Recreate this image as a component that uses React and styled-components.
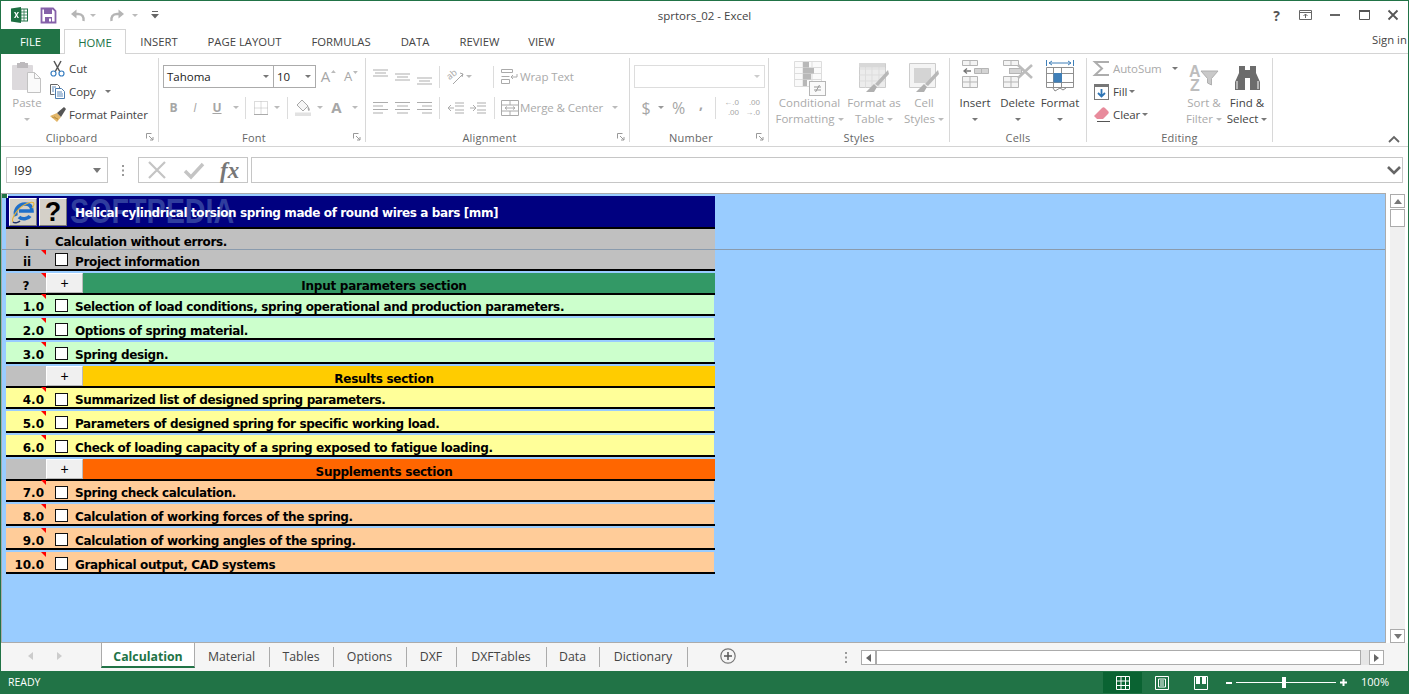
import React from 'react';
import styled, { createGlobalStyle } from 'styled-components';

const GREEN = '#217346';
const UI = '"Open Sans", "Noto Sans", sans-serif';

const Global = createGlobalStyle`
  html, body { margin: 0; padding: 0; overflow: hidden; background: #fff; }
  * { box-sizing: border-box; }
  svg { overflow: visible; }
`;
const Win = styled.div`
  width: 1409px; height: 694px; display: flex; flex-direction: column;
  border: 1px solid ${GREEN}; border-bottom: 0; font-family: ${UI}; font-size: 11.5px; color: #444; background: #fff; overflow: hidden;
`;
/* title bar */
const TitleBar = styled.header`
  height: 28px; flex: none; display: grid; grid-template-columns: 1fr auto 1fr; align-items: center; color: #444;
`;
const Qat = styled.div`display: flex; align-items: center; padding-left: 10px; height: 100%;`;
const QatSlot = styled.span`display: flex; align-items: center; width: ${p => p.$w}px; flex: none;`;
const Title = styled.div`font-size: 11.5px; color: #444;`;
const WinCtl = styled.div`display: flex; justify-content: flex-end; align-items: center; padding-right: 0;`;
const WinBtn = styled.span`width: 29.2px; display: flex; justify-content: center; color: #555; align-items: center; font-weight: 700; font-size: 14px;`;

/* ribbon tabs */
const TabRow = styled.nav`
  height: 25px; flex: none; display: flex; border-bottom: 1px solid #d4d4d4; font-size: 11.3px;
`;
const FileTab = styled.div`width: 59px; height: 25px; background: ${GREEN}; color: #fff; display: flex; align-items: center; justify-content: center; margin-right: 4px; flex: none;`;
const RibTab = styled.div`
  width: ${p => p.$w}px; height: ${p => (p.$on ? 25 : 24)}px; display: flex; align-items: center; justify-content: center; flex: none;
  color: ${p => (p.$on ? GREEN : '#444')}; background: #fff;
  border: ${p => (p.$on ? '1px solid #d4d4d4' : '0')}; border-bottom: 0;
`;
const SignIn = styled.div`margin-left: auto; width: 36px; height: 20px; display: flex; align-items: center; white-space: nowrap; color: #444; flex: none; font-size: 11.3px;`;

/* ribbon */
const Ribbon = styled.div`
  height: 93px; flex: none; display: flex; padding: 4px 0; border-bottom: 1px solid #d4d4d4; position: relative;
`;
const Group = styled.section`
  width: ${p => p.$w}px; flex: none; height: 84px; display: flex; flex-direction: column; border-right: 1px solid #d8d8d8;
`;
const Body = styled.div`
  flex: 1; min-height: 0; display: flex; padding-left: ${p => p.$pl || 0}px;
`;
const Foot = styled.div`
  height: 16px; margin-bottom: -3px; flex: none; display: flex; align-items: center; font-size: 11px; color: #666; letter-spacing: .2px;
`;
const FootText = styled.span`flex: 1; text-align: center;`;
const Launcher = styled.span`width: 16px; flex: none; display: flex; justify-content: center;`;
const Big = styled.div`
  width: ${p => p.$w}px; flex: none; display: flex; flex-direction: column; align-items: center; line-height: 16px;
  color: ${p => (p.$off ? '#aaa' : '#444')}; white-space: nowrap;
`;
const BigIcon = styled.div`height: 36px; margin-top: 2px; margin-bottom: -1px; display: flex; align-items: ${p => (p.$top ? 'flex-start' : 'center')}; justify-content: center;`;
const Line = styled.div`height: 16px; display: flex; align-items: center; justify-content: center; gap: 3px;`;
const SmallCol = styled.div`display: flex; flex-direction: column; margin-top: -1px; margin-left: ${p => p.$ml || 0}px; width: ${p => (p.$w ? `${p.$w}px` : 'auto')}; flex: none;`;
const SmallRow = styled.div`
  height: 23px; display: flex; align-items: center; white-space: nowrap; letter-spacing: -.1px; color: ${p => (p.$off ? '#aaa' : '#444')};
`;
const IconBox = styled.span`width: ${p => p.$w || 19}px; flex: none; display: flex; align-items: center; margin-left: ${p => p.$ml || 0}px;`;
const Caret = styled.i`
  display: inline-block; flex: none; width: 0; height: 0; border-left: 3px solid transparent; border-right: 3px solid transparent;
  border-top: 3px solid ${p => p.$c || '#777'}; margin-left: ${p => p.$ml || 0}px;
`;
const Stack = styled.div`display: flex; flex-direction: column; margin-top: 7px;`;
const ToolRow = styled.div`display: flex; align-items: center; height: 23px; margin-bottom: ${p => p.$mb || 0}px;`;
const Combo = styled.div`
  width: ${p => p.$w}px; height: 23px; margin-left: ${p => p.$ml || 0}px; flex: none; display: flex; align-items: center; justify-content: space-between; padding: 0 4px 0 3px;
  border: 1px solid ${p => p.$line || '#ababab'}; color: #222; font-size: 11.5px;
`;
const Slot = styled.span`
  width: ${p => p.$w}px; flex: none; display: flex; align-items: center; justify-content: center; color: #a6a6a6;
  font-size: ${p => p.$fs || 13}px; font-weight: ${p => (p.$b ? 700 : 400)}; font-style: ${p => (p.$i ? 'italic' : 'normal')};
  text-decoration: ${p => (p.$u ? 'underline' : 'none')}; line-height: 1; padding-bottom: ${p => p.$lift || 0}px;
`;
const SizeTick = styled.span`align-self: flex-start; margin-left: 1px; margin-top: 1px; display: flex;`;
const Sep = styled.span`width: 1px; height: 22px; background: #dcdcdc; flex: none; margin: 0 ${p => p.$m || 4}px;`;
const Decimal = styled.span`display: flex; flex-direction: column; font: 8px/9.5px "Liberation Sans", sans-serif; color: #a6a6a6; align-items: flex-end; width: 17px; margin-left: ${p => p.$ml || 0}px; flex: none;`;
const Collapse = styled.span`position: absolute; right: 8px; bottom: 3px; display: flex;`;

/* formula bar */
const FormulaBar = styled.div`height: 46px; flex: none; display: flex; align-items: flex-start; padding: 10px 5px 0 5px;`;
const NameBox = styled.div`
  width: 102px; height: 26px; border: 1px solid #c6c6c6; display: flex; align-items: center; justify-content: space-between; padding: 0 6px 0 7px; color: #333; flex: none; font-size: 12.5px;
`;
const Dots = styled.div`width: 30px; height: 26px; flex: none; display: flex; align-items: center; justify-content: center;`;
const FxBox = styled.div`width: 110px; height: 26px; border: 1px solid #c6c6c6; display: flex; align-items: center; padding-left: 9px; flex: none;`;
const FxSlot = styled.span`width: ${p => p.$w}px; flex: none; display: flex; align-items: center;`;
const FxText = styled.span`font-family: "Liberation Serif", serif; font-style: italic; font-weight: 700; font-size: 23px; color: #777; line-height: 1;`;
const FInput = styled.div`flex: 1; height: 26px; margin-left: 3px; border: 1px solid #c6c6c6; display: flex; align-items: center; justify-content: flex-end; padding-right: 1px;`;

/* sheet */
const SheetWrap = styled.main`flex: 1; min-height: 0; display: flex;`;
const Canvas = styled.div`
  flex: 1; background: #99ccff; border: 1px solid #ababab; padding: 2px 0 0 4px; position: relative; overflow: hidden;
`;
const FreezeLine = styled.span`position: absolute; left: 0; right: 0; top: 55px; height: 1px; background: #8a9bad; z-index: 3;`;
const Handle = styled.span`position: absolute; left: 0; top: 0; width: 6px; height: 4px; background: ${GREEN}; border-right: 1px solid #fff; z-index: 3;`;
const VScroll = styled.div`width: 22px; flex: none; padding: 1px 3px 0 4px; display: flex; flex-direction: column; background: #fff;`;
const SBtn = styled.div`height: ${p => p.$h || 14}px; margin-top: ${p => p.$mt || 0}px; flex: none; border: 1px solid #ababab; background: #fff; display: flex; align-items: center; justify-content: center;`;
const Track = styled.div`flex: 1; background: #f0f0f0;`;

const Table = styled.div`width: 709px; display: flex; flex-direction: column;`;
const Head = styled.div`
  height: 33px; background: #000080; border-bottom: 2px solid #000; display: flex; align-items: center; padding: 1px 0 0 3px; position: relative;
`;
const Watermark = styled.span`
  position: absolute; left: 64px; top: 0; font: 700 35px/29px "Liberation Sans", sans-serif; color: #2f3d9e; white-space: nowrap; transform: scaleX(.82); transform-origin: left center;
`;
const HeadBtn = styled.div`
  width: 28px; height: 28px; flex: none; margin-right: 2px; background: #d4d0c8; border: 1px solid; border-color: #fff #777 #777 #fff; display: flex; align-items: center; justify-content: center; position: relative;
  font: 700 27px "Liberation Sans", sans-serif; color: #000;
`;
const sheetFont = '"DejaVu Sans", Verdana, sans-serif';
const HeadTitle = styled.div`
  position: relative; margin-left: 6px; padding-top: 2px; color: #fff; font: 700 12px ${sheetFont}; letter-spacing: -.39px; white-space: nowrap;
`;
const Row = styled.div`
  margin-top: ${p => p.$gap || 0}px; height: ${p => p.$h + (p.$line ? 2 : 0)}px; flex: none; border-bottom: ${p => (p.$line ? '2px solid #000' : '0')};
  display: flex; position: relative;
`;
const RowFill = styled.div`
  flex: 1; background: ${p => p.$bg}; margin-right: ${p => p.$inset || 0}px; display: flex; align-items: center; padding-top: 5px;
  font: 700 12px ${sheetFont}; letter-spacing: -.36px; color: #000; white-space: nowrap;
`;
const Num = styled.span`
  width: 40px; flex: none; padding: ${p => (p.$center ? '0 0 0 2px' : '0 2px 0 0')}; text-align: ${p => (p.$center ? 'center' : 'right')}; letter-spacing: 0;
`;
const Box = styled.span`width: 13px; height: 13px; flex: none; margin-left: 9px; background: #fff; border: 1px solid #111; margin-top: ${p => p.$mt ?? -2}px;`;
const RowText = styled.span`margin-left: ${p => p.$ml ?? 7}px;`;
const Flag = styled.span`
  position: absolute; left: 35px; top: ${p => p.$top ?? 0}px; width: 0; height: 0; border-top: 5px solid #ff0000; border-left: 5px solid transparent; z-index: 2;
`;
const PlusBtn = styled.div`
  width: 37px; flex: none; background: #f0f0f0; border: 1px solid; border-color: #fff #bbb #bbb #fff; color: #000; display: flex; align-items: center; justify-content: center;
  font: 400 14px "Liberation Sans", sans-serif;
`;
const SecCell = styled.div`width: 40px; flex: none; background: #c0c0c0; display: flex; align-items: center; justify-content: center; padding-top: 6px; font: 700 12px ${sheetFont}; color: #000;`;
const SecTitle = styled.div`
  flex: 1; background: ${p => p.$bg}; display: flex; align-items: center; justify-content: center; padding: 6px 30px 0 0; font: 700 12px ${sheetFont}; letter-spacing: -.26px; color: #000;
`;

/* sheet tabs */
const TabsBar = styled.div`height: 28px; flex: none; background: #f5f5f5; display: flex; align-items: flex-start;`;
const Nav = styled.div`width: 100px; height: 26px; flex: none; display: flex; align-items: center; padding-left: 27px; gap: 24px;`;
const SheetTab = styled.div`
  width: ${p => p.$w}px; flex: none; display: flex; align-items: center; justify-content: center;
  height: ${p => (p.$on ? 25 : 20)}px; margin-top: ${p => (p.$on ? 0 : 4)}px; font-size: 12.3px; color: ${p => (p.$on ? GREEN : '#444')}; font-weight: ${p => (p.$on ? 700 : 400)};
  background: ${p => (p.$on ? '#fff' : 'transparent')}; border-right: 1px solid #ababab; border-left: ${p => (p.$on ? '1px solid #ababab' : '0')};
  border-bottom: ${p => (p.$on ? `2px solid ${GREEN}` : '0')}; padding: ${p => (p.$on ? '3px 0 0' : '0 1px 1px 0')};
`;
const AddTab = styled.span`margin-left: 32px; height: 26px; display: flex; align-items: center;`;
const HRight = styled.div`margin-left: auto; display: flex; align-items: center; height: 15px; margin-top: 7px; padding-right: 24px;`;
const HDots = styled.span`margin-right: 14px; display: flex;`;
const HBtn = styled.div`width: 15px; height: 15px; flex: none; border: 1px solid #ababab; background: #fff; display: flex; align-items: center; justify-content: center;`;
const HThumb = styled.div`width: 485px; height: 15px; border: 1px solid #ababab; background: #fff; flex: none;`;
const HTrack = styled.div`width: 8px; height: 15px; background: #e6e6e6; flex: none;`;

/* status */
const Status = styled.footer`height: 23px; flex: none; background: ${GREEN}; color: #fff; display: flex; align-items: center; font-size: 10.5px; padding-left: 7px;`;
const StatusText = styled.span`margin-top: -2px;`;
const StatusRight = styled.div`margin-left: auto; display: flex; align-items: center; height: 100%; padding-right: 19px;`;
const ViewBtn = styled.span`width: 39px; height: 21px; display: flex; align-items: center; justify-content: center; background: ${p => (p.$on ? '#0a6332' : 'transparent')};`;
const Slider = styled.div`width: 100px; height: 1px; background: #fff; margin: 0 4px; position: relative;`;
const Thumb = styled.span`position: absolute; left: 46px; top: -5px; width: 4px; height: 11px; background: #fff;`;
const ZoomPct = styled.span`font-size: 11px; margin: -3px 0 0 14px;`;

const ExcelLogo = () => (
  <svg width="17" height="16" viewBox="0 0 17 16">
    <rect x="6" y="2" width="10.5" height="12" fill="#fff" stroke="#217346" />
    <path d="M10 2v12M13 2v12M6 5h10M6 8h10M6 11h10" stroke="#217346" strokeWidth=".8" />
    <path d="M0 1.5 10 0v16L0 14.5z" fill="#1d6f42" />
    <path d="M3 5l1.7 3L3 11h1.5l1-2 1 2H8L6.2 8 8 5H6.5l-1 2-1-2z" fill="#fff" />
  </svg>
);
const SaveIcon = () => (
  <svg width="15" height="15" viewBox="0 0 15 15">
    <path d="M.5.5h11.5l2.5 2.5v11.5H.5z" fill="#fff" stroke="#8561a9" strokeWidth="1.8" />
    <rect x="3" y="1" width="8" height="5" fill="#8561a9" />
    <rect x="4" y="9" width="7" height="5" fill="#8561a9" />
    <rect x="8" y="10.5" width="2" height="3" fill="#fff" />
  </svg>
);
const UndoIcon = ({ flip }) => (
  <svg width="15" height="13" viewBox="0 0 15 13" style={flip ? { transform: 'scaleX(-1)' } : undefined}>
    <path d="M13.5 12c.5-4-1-7-5.5-7H3" fill="none" stroke="#b5b5b5" strokeWidth="2.4" />
    <path d="M6.5 .5 1 5l5.5 4.5z" fill="#b5b5b5" />
  </svg>
);
const QatMore = () => (
  <svg width="8" height="8" viewBox="0 0 8 8"><path d="M1 0h6v1H1zM0 3h8L4 7.5z" fill="#666" /></svg>
);
const PasteIcon = () => (
  <svg width="30" height="32" viewBox="0 0 30 32">
    <rect x="0" y="3" width="21" height="25" rx="1" fill="#dcd9dc" />
    <rect x="5" y="1" width="11" height="5" fill="#bdbabd" />
    <rect x="8" y="0" width="5" height="3" fill="#bdbabd" />
    <path d="M15.5 10.5h7l6 6v14h-13z" fill="#fafafa" stroke="#c2c2c2" />
    <path d="M22.5 10.5v6h6" fill="none" stroke="#c2c2c2" />
  </svg>
);
const CutIcon = () => (
  <svg width="15" height="16" viewBox="0 0 15 16">
    <path d="M4 0l6 11M11 0 5 11" stroke="#555" strokeWidth="1.5" />
    <circle cx="3.5" cy="12.5" r="2.5" fill="none" stroke="#3a7fc1" strokeWidth="1.2" />
    <circle cx="11.5" cy="12.5" r="2.5" fill="none" stroke="#3a7fc1" strokeWidth="1.2" />
  </svg>
);
const CopyIcon = () => (
  <svg width="16" height="15" viewBox="0 0 16 15">
    <path d="M.5.5h7l2 2v2M.5.5v10h4" fill="#fff" stroke="#666" />
    <path d="M5.5 4.5h6l3 3v7h-9z" fill="#fff" stroke="#4a7cb0" />
    <path d="M7 8h5M7 10h6M7 12h6M2 3h4M2 5h2M2 7h2" stroke="#4a7cb0" strokeWidth=".9" />
  </svg>
);
const BrushIcon = () => (
  <svg width="16" height="15" viewBox="0 0 16 15">
    <path d="M0 9l7-3 4 4-4 5C5 13 2 11 0 9z" fill="#e3b76a" />
    <path d="M2 10l6 2M4 9.5l4 3" stroke="#b98f3f" strokeWidth=".8" />
    <path d="M7 6l4 4 5-8-2-2z" fill="#555" />
  </svg>
);
const BordersIcon = () => (
  <svg width="14" height="14" viewBox="0 0 14 14">
    <path d="M.5.5h13v13H.5zM7 .5v13M.5 7h13" fill="none" stroke="#b9b9b9" strokeDasharray="1 1" />
    <path d="M0 13.5h14" stroke="#aaa" />
  </svg>
);
const FillIcon = () => (
  <svg width="17" height="17" viewBox="0 0 17 17">
    <path d="M7 1l6 6-5 5-6-6z" fill="#f6f6f6" stroke="#a8a8a8" />
    <path d="M13 7c1 2 2.5 3 1.5 4.5S12 10 13 7z" fill="#a8a8a8" />
    <rect x="0" y="13.5" width="16" height="3.5" fill="#e2e2e2" />
  </svg>
);
const Lines = ({ kind }) => {
  const rowsOf = { l: [[0, 15], [0, 10], [0, 15], [0, 10]], c: [[0, 15], [2, 11], [0, 15], [2, 11]], r: [[0, 15], [5, 10], [0, 15], [5, 10]] }[kind];
  return (
    <svg width="15" height="13" viewBox="0 0 15 13">
      {rowsOf.map((a, i) => <rect key={i} x={a[0]} y={i * 3.5 + 1} width={a[1]} height="1" fill="#adadad" />)}
    </svg>
  );
};
const VAlign = ({ y }) => (
  <svg width="15" height="18" viewBox="0 0 15 18">
    <path d={`M0 ${y}h15M2 ${y + 3}h11M0 ${y + 6}h15`} stroke="#adadad" />
  </svg>
);
const OrientIcon = () => (
  <svg width="16" height="16" viewBox="0 0 16 16">
    <text x="0" y="9" transform="rotate(-40 4 8)" fontSize="9" fill="#a6a6a6" fontFamily='"Open Sans", sans-serif'>ab</text>
    <path d="M5 15 15 5M12 4l3 1-1 3" fill="none" stroke="#a6a6a6" />
  </svg>
);
const Indent = ({ dir }) => (
  <svg width="16" height="12" viewBox="0 0 16 12">
    <path d="M7 1h9M7 4h9M7 8h9M7 11h9" stroke="#adadad" />
    <path d={dir < 0 ? 'M0 6h6M3 3 0 6l3 3' : 'M0 6h5M3 3l3 3-3 3'} fill="none" stroke="#adadad" />
  </svg>
);
const WrapIcon = () => (
  <svg width="18" height="16" viewBox="0 0 18 16">
    <path d="M.5.5h11v3H.5zM.5 7.5h8M.5 10.5h8v4H.5zM11 8h5V5M12 6l-2 2 2 2" fill="none" stroke="#aaa" />
  </svg>
);
const MergeIcon = () => (
  <svg width="18" height="16" viewBox="0 0 18 16">
    <path d="M.5.5h17v15H.5zM.5 5h17M.5 11h17M9 .5V5M9 11v4.5" fill="none" stroke="#aaa" />
    <path d="M4 8h10M6 6.5 4 8l2 1.5M12 6.5 14 8l-2 1.5" fill="none" stroke="#aaa" />
  </svg>
);
const Launch = () => (
  <svg width="8" height="8" viewBox="0 0 8 8"><path d="M.5 .5h5M.5 .5v5M3 3l4 4M7 4v3H4" fill="none" stroke="#999" /></svg>
);
const CFIcon = () => (
  <svg width="32" height="35" viewBox="0 0 32 35">
    <path d="M.5.5h27v25H.5z" fill="#fafafa" stroke="#ddd" />
    <path d="M9 .5v25M18 .5v25M.5 6.5h27M.5 12.5h27M.5 18.5h27" stroke="#ddd" />
    <rect x="9" y="1" width="6" height="5.5" fill="#b8b8b8" /><rect x="9" y="7" width="11" height="5.5" fill="#b8b8b8" /><rect x="9" y="13" width="8" height="5.5" fill="#b8b8b8" /><rect x="9" y="19" width="4" height="6" fill="#b8b8b8" />
    <rect x="15.5" y="20.5" width="16" height="14" fill="#fafafa" stroke="#b5b5b5" />
    <path d="M20 26h7M20 29h7M25.5 24l-4 7" stroke="#999" />
  </svg>
);
const TableIcon = ({ cell }) => (
  <svg width="30" height="30" viewBox="0 0 30 30">
    <path d="M.5.5h26v24H.5z" fill={cell ? '#f4f4f4' : '#ececec'} stroke="#ccc" />
    {cell ? <rect x="5" y="5" width="17" height="15" fill="#d4d4d4" /> : <path d="M6.5.5v24M13 .5v24M20 .5v24M.5 6h26M.5 12h26M.5 18h26" stroke="#ddd" />}
    {!cell && <rect x="0" y="0" width="26" height="4.5" fill="#d8d8d8" />}
    <path d="M10 26 15 21l3 3-3 5H7z" fill="#b0b0b0" />
    <path d="M16 21 29 7l1 4-11 12z" fill="#b8b8b8" />
  </svg>
);
const InsertIcon = () => (
  <svg width="27" height="28" viewBox="0 0 27 28">
    <path d="M.5.5h15v5H.5zM8 .5v5M.5 16.5h15v11H.5zM.5 22h15M8 16.5v11" fill="#f4f4f4" stroke="#b5b5b5" />
    <path d="M12.5 8.5h7v5h-7zM19.5 8.5h7v5h-7z" fill="#d4d4d4" stroke="#b5b5b5" />
    <path d="M2 11h7M5 8.5 2 11l3 2.5" fill="none" stroke="#777" strokeWidth="1.3" />
  </svg>
);
const DeleteIcon = () => (
  <svg width="30" height="28" viewBox="0 0 30 28">
    <path d="M.5.5h15v5H.5zM8 .5v5M.5 16.5h15v11H.5zM.5 22h15M8 16.5v11" fill="#f4f4f4" stroke="#b5b5b5" />
    <rect x="6.5" y="8.5" width="12" height="5" fill="#d4d4d4" stroke="#b5b5b5" />
    <path d="M15 5 29 18M29 5 15 18" stroke="#bcbcbc" strokeWidth="2.6" />
  </svg>
);
const FormatIcon = () => (
  <svg width="29" height="32" viewBox="0 0 29 32">
    <path d="M.5 0v6M27.5 0v6M3 3h22M6 1 3 3l3 2M22 1l3 2-3 2" fill="none" stroke="#3f7fb8" />
    <path d="M.5 7.5h27v20H.5zM.5 13.5h27M.5 22.5h27M7.5 7.5v20M15.5 7.5v20" fill="#fff" stroke="#8f8f8f" />
    <rect x="7.5" y="13" width="8.5" height="9.5" fill="#3f7fb8" />
    <path d="M7 28l2 3 5-3 3 2 3-2" fill="none" stroke="#888" />
  </svg>
);
const Sigma = () => (
  <svg width="16" height="15" viewBox="0 0 16 15"><path d="M15 1H1l7 6.5L1 14h14" fill="none" stroke="#adadad" strokeWidth="2" /></svg>
);
const FillDown = () => (
  <svg width="15" height="16" viewBox="0 0 15 16">
    <rect x=".5" y=".5" width="14" height="15" fill="#fff" stroke="#777" /><rect x="0" y="0" width="15" height="3" fill="#777" />
    <path d="M7.5 5v7M4 9l3.5 3.5L11 9" fill="none" stroke="#2f75b5" strokeWidth="1.8" />
  </svg>
);
const Eraser = () => (
  <svg width="16" height="15" viewBox="0 0 16 15">
    <path d="M0 9 8 1c1-1 2-1 3 0l3 3c1 1 1 2 0 3l-5 5H3z" fill="#e88b9c" />
    <path d="M3 14.5h13" stroke="#555" />
  </svg>
);
const SortIcon = () => (
  <svg width="30" height="28" viewBox="0 0 30 28">
    <text x="0" y="13" fontSize="16" fontWeight="700" fill="#bdbdbd" fontFamily='"Liberation Sans", sans-serif'>A</text>
    <text x="1" y="27" fontSize="16" fontWeight="700" fill="#bdbdbd" fontFamily='"Liberation Sans", sans-serif'>Z</text>
    <path d="M12 7h17l-6.5 7.5V21l-4-2v-4.5z" fill="#c9c9c9" stroke="#b0b0b0" />
  </svg>
);
const Binoculars = () => (
  <svg width="27" height="24" viewBox="0 0 27 24">
    <path d="M5 0h6v4h5V0h6v7l4 9v8H16V12h-5v12H1v-8l4-9z" fill="#6c6c6c" />
    <path d="M3 15v8M24 15v8" stroke="#fff" />
  </svg>
);
const IELogo = () => (
  <svg width="24" height="24" viewBox="0 0 24 24">
    <path d="M5 16C3 11 7 4 14 4c5 0 7 3 7 7H8M19 16c-2 3-8 4-11 1" fill="none" stroke="#1f6fc9" strokeWidth="3.6" />
    <path d="M2 22C0 19 6 8 15 4c5-2.5 8-2 8 0 0 1.5-1 3-2 4" fill="none" stroke="#e5b23a" strokeWidth="1.1" />
    <path d="M2 22c2 2 6 0 7-1" fill="none" stroke="#23356f" strokeWidth="1.5" />
  </svg>
);
const X = () => <svg width="18" height="18" viewBox="0 0 18 18"><path d="M1 1 17 17M17 1 1 17" stroke="#c4c4c4" strokeWidth="2.2" /></svg>;
const Check = () => <svg width="20" height="17" viewBox="0 0 20 17"><path d="M1 9l6 6L19 2" fill="none" stroke="#c4c4c4" strokeWidth="3.4" /></svg>;
const Chev = () => <svg width="14" height="9" viewBox="0 0 14 9"><path d="M1 1l6 6 6-6" fill="none" stroke="#666" strokeWidth="2.6" /></svg>;
const Up = () => <svg width="12" height="7" viewBox="0 0 12 7"><path d="M1 6l5-5 5 5" fill="none" stroke="#666" strokeWidth="1.8" /></svg>;
const DotsV = ({ c = '#999' }) => <svg width="2" height="11" viewBox="0 0 2 11"><path d="M0 0h2v2H0zM0 4.5h2v2H0zM0 9h2v2H0z" fill={c} /></svg>;
const Tri = ({ dir, c = '#777', s = 1 }) => {
  const d = { u: 'M4 0l4 5H0z', d: 'M0 0h8L4 5z', l: 'M5 0v8L0 4z', r: 'M0 0v8l5-4z' }[dir];
  const w = dir === 'u' || dir === 'd' ? 8 : 5; const h = dir === 'u' || dir === 'd' ? 5 : 8;
  return <svg width={w * s} height={h * s} viewBox={`0 0 ${w} ${h}`}><path d={d} fill={c} /></svg>;
};
const Plus = () => (
  <svg width="16" height="16" viewBox="0 0 16 16"><circle cx="8" cy="8" r="7.2" fill="none" stroke="#777" strokeWidth="1.2" /><path d="M4 8h8M8 4v8" stroke="#555" strokeWidth="1.5" /></svg>
);
const ViewNormal = () => <svg width="14" height="14" viewBox="0 0 14 14"><path d="M.5.5h13v13H.5zM5 .5v13M9.5 .5v13M.5 5h13M.5 9.5h13" fill="none" stroke="#fff" /></svg>;
const ViewPage = () => <svg width="14" height="14" viewBox="0 0 14 14"><path d="M.5.5h13v13H.5z" fill="none" stroke="#fff" /><path d="M3.5 3h7v8h-7zM5 5h4M5 7h4M5 9h4" fill="none" stroke="#fff" /></svg>;
const ViewBreak = () => <svg width="14" height="14" viewBox="0 0 14 14"><path d="M.5.5h13v13H.5z" fill="none" stroke="#fff" /><path d="M2 0h4v8H2zM8 0h4v8H8z" fill="#fff" /></svg>;

const rows = [
  { t: 's', n: '?', title: 'Input parameters section', bg: '#339966', flag: true },
  { n: '1.0', text: 'Selection of load conditions, spring operational and production parameters.', bg: '#ccffcc', h: 19, boxMt: -4 },
  { n: '2.0', text: 'Options of spring material.', bg: '#ccffcc' },
  { n: '3.0', text: 'Spring design.', bg: '#ccffcc' },
  { t: 's', title: 'Results section', bg: '#ffcc00' },
  { n: '4.0', text: 'Summarized list of designed spring parameters.', bg: '#ffff99', h: 19 },
  { n: '5.0', text: 'Parameters of designed spring for specific working load.', bg: '#ffff99' },
  { n: '6.0', text: 'Check of loading capacity of a spring exposed to fatigue loading.', bg: '#ffff99' },
  { t: 's', title: 'Supplements section', bg: '#ff6600' },
  { n: '7.0', text: 'Spring check calculation.', bg: '#ffcc99', h: 19 },
  { n: '8.0', text: 'Calculation of working forces of the spring.', bg: '#ffcc99' },
  { n: '9.0', text: 'Calculation of working angles of the spring.', bg: '#ffcc99' },
  { n: '10.0', text: 'Graphical output, CAD systems', bg: '#ffcc99' },
];
const ribbonTabs = [['INSERT', 66], ['PAGE LAYOUT', 105], ['FORMULAS', 88], ['DATA', 60], ['REVIEW', 69], ['VIEW', 55]];
const sheets = [['Material', 75], ['Tables', 64], ['Options', 73], ['DXF', 50], ['DXFTables', 90], ['Data', 53], ['Dictionary', 88]];

export default function App() {
  return (
    <Win>
      <Global />
      <TitleBar>
        <Qat>
          <QatSlot $w={30}><ExcelLogo /></QatSlot>
          <QatSlot $w={29}><SaveIcon /></QatSlot>
          <QatSlot $w={20}><UndoIcon /></QatSlot>
          <QatSlot $w={20}><Caret $c="#bbb" /></QatSlot>
          <QatSlot $w={22}><UndoIcon flip /></QatSlot>
          <QatSlot $w={19}><Caret $c="#bbb" /></QatSlot>
          <QatSlot $w={10}><QatMore /></QatSlot>
        </Qat>
        <Title>sprtors_02 - Excel</Title>
        <WinCtl>
          <WinBtn>?</WinBtn>
          <WinBtn><svg width="13" height="10" viewBox="0 0 13 10"><path d="M.5.5h12v9H.5zM.5 2.5h12M6.5 8V4M4.5 6l2-2 2 2" fill="none" stroke="#666" /></svg></WinBtn>
          <WinBtn><svg width="10" height="2" viewBox="0 0 10 2"><rect width="10" height="2" fill="#666" /></svg></WinBtn>
          <WinBtn><svg width="11" height="10" viewBox="0 0 11 10"><path d="M.5.5h10v9H.5z" fill="none" stroke="#555" /><rect width="11" height="2" fill="#555" /></svg></WinBtn>
          <WinBtn><svg width="10" height="10" viewBox="0 0 10 10"><path d="M.5.5l9 9M9.5.5l-9 9" stroke="#555" strokeWidth="1.8" /></svg></WinBtn>
        </WinCtl>
      </TitleBar>
      <TabRow>
        <FileTab>FILE</FileTab>
        <RibTab $on $w={62}>HOME</RibTab>
        {ribbonTabs.map(([t, w]) => <RibTab key={t} $w={w}>{t}</RibTab>)}
        <SignIn>Sign in</SignIn>
      </TabRow>
      <Ribbon>
        <Group $w={158}>
          <Body $pl={11}>
            <Big $w={30} $off>
              <BigIcon><PasteIcon /></BigIcon>
              <Line>Paste</Line>
              <Line><Caret $c="#bbb" /></Line>
            </Big>
            <SmallCol $ml={8}>
              <SmallRow><IconBox><CutIcon /></IconBox>Cut</SmallRow>
              <SmallRow><IconBox><CopyIcon /></IconBox>Copy<Caret $ml={9} /></SmallRow>
              <SmallRow><IconBox><BrushIcon /></IconBox>Format Painter</SmallRow>
            </SmallCol>
          </Body>
          <Foot><FootText>Clipboard</FootText><Launcher><Launch /></Launcher></Foot>
        </Group>
        <Group $w={207}>
          <Body $pl={4}>
            <Stack>
              <ToolRow $mb={8}>
                <Combo $w={111}>Tahoma<Caret /></Combo>
                <Combo $w={43} $ml={-1}>10<Caret /></Combo>
                <Slot $w={25} $fs={15}>A<SizeTick><Tri dir="u" c="#bbb" s={.6} /></SizeTick></Slot>
                <Slot $w={20} $fs={13}>A<SizeTick><Tri dir="d" c="#bbb" s={.6} /></SizeTick></Slot>
              </ToolRow>
              <ToolRow>
                <Slot $w={21} $b $fs={12}>B</Slot>
                <Slot $w={22} $i $fs={12}>I</Slot>
                <Slot $w={22} $u $b $fs={12}>U</Slot>
                <Caret $c="#bbb" $ml={5} />
                <Sep $m={6} />
                <IconBox $w={14} $ml={2}><BordersIcon /></IconBox>
                <Caret $c="#bbb" $ml={6} />
                <Sep $m={7} />
                <IconBox $w={17}><FillIcon /></IconBox>
                <Caret $c="#bbb" $ml={5} />
                <Slot $w={27} $fs={15} $b>A</Slot>
                <Caret $c="#bbb" $ml={2} />
              </ToolRow>
            </Stack>
          </Body>
          <Foot><FootText>Font</FootText><Launcher><Launch /></Launcher></Foot>
        </Group>
        <Group $w={264}>
          <Body $pl={7}>
            <Stack>
              <ToolRow $mb={8}>
                <IconBox $w={22}><VAlign y={2} /></IconBox>
                <IconBox $w={22}><VAlign y={6} /></IconBox>
                <IconBox $w={21}><VAlign y={10} /></IconBox>
                <Sep $m={1} />
                <IconBox $w={18} $ml={7}><OrientIcon /></IconBox>
                <Caret $c="#bbb" />
                <Sep $m={21} />
                <IconBox $w={19} $ml={-14}><WrapIcon /></IconBox>
                <SmallRow $off>Wrap Text</SmallRow>
              </ToolRow>
              <ToolRow>
                <IconBox $w={22}><Lines kind="l" /></IconBox>
                <IconBox $w={22}><Lines kind="c" /></IconBox>
                <IconBox $w={21}><Lines kind="r" /></IconBox>
                <Sep $m={1} />
                <IconBox $w={22} $ml={7}><Indent dir={-1} /></IconBox>
                <IconBox $w={18}><Indent dir={1} /></IconBox>
                <Sep $m={6} />
                <IconBox $w={19}><MergeIcon /></IconBox>
                <SmallRow $off>Merge &amp; Center</SmallRow>
                <Caret $c="#bbb" $ml={9} />
              </ToolRow>
            </Stack>
          </Body>
          <Foot><FootText>Alignment</FootText><Launcher><Launch /></Launcher></Foot>
        </Group>
        <Group $w={139}>
          <Body $pl={4}>
            <Stack>
              <ToolRow $mb={8}><Combo $w={131} $line="#ddd"><span /><Caret $c="#ccc" /></Combo></ToolRow>
              <ToolRow>
                <Slot $w={24} $fs={16}>$</Slot>
                <Caret $c="#999" />
                <Slot $w={29} $fs={16}>%</Slot>
                <Slot $w={16} $b $fs={14} $lift={8}>,</Slot>
                <Sep $m={6} />
                <Decimal><span>←.0</span><span>.00</span></Decimal>
                <Decimal $ml={4}><span>.00</span><span>→.0</span></Decimal>
              </ToolRow>
            </Stack>
          </Body>
          <Foot><FootText>Number</FootText><Launcher><Launch /></Launcher></Foot>
        </Group>
        <Group $w={181}>
          <Body $pl={5}>
            <Big $w={71} $off><BigIcon><CFIcon /></BigIcon><Line>Conditional</Line><Line>Formatting<Caret $c="#bbb" /></Line></Big>
            <Big $w={58} $off><BigIcon><TableIcon /></BigIcon><Line>Format as</Line><Line>Table<Caret $c="#bbb" /></Line></Big>
            <Big $w={42} $off><BigIcon><TableIcon cell /></BigIcon><Line>Cell</Line><Line>Styles<Caret $c="#bbb" /></Line></Big>
          </Body>
          <Foot><FootText>Styles</FootText></Foot>
        </Group>
        <Group $w={137}>
          <Body $pl={4}>
            <Big $w={42}><BigIcon $top><InsertIcon /></BigIcon><Line>Insert</Line><Line><Caret /></Line></Big>
            <Big $w={43}><BigIcon $top><DeleteIcon /></BigIcon><Line>Delete</Line><Line><Caret /></Line></Big>
            <Big $w={42}><BigIcon $top><FormatIcon /></BigIcon><Line>Format</Line><Line><Caret /></Line></Big>
          </Body>
          <Foot><FootText>Cells</FootText></Foot>
        </Group>
        <Group $w={186}>
          <Body $pl={7}>
            <SmallCol $w={89}>
              <SmallRow $off><IconBox><Sigma /></IconBox>AutoSum<Caret $ml={10} /></SmallRow>
              <SmallRow><IconBox><FillDown /></IconBox>Fill<Caret $ml={2} /></SmallRow>
              <SmallRow><IconBox><Eraser /></IconBox>Clear<Caret $ml={2} /></SmallRow>
            </SmallCol>
            <Big $w={42} $off><BigIcon><SortIcon /></BigIcon><Line>Sort &amp;</Line><Line>Filter<Caret $c="#bbb" /></Line></Big>
            <Big $w={44}><BigIcon><Binoculars /></BigIcon><Line>Find &amp;</Line><Line>Select<Caret /></Line></Big>
          </Body>
          <Foot><FootText>Editing</FootText></Foot>
        </Group>
        <Collapse><Up /></Collapse>
      </Ribbon>
      <FormulaBar>
        <NameBox>I99<Tri dir="d" /></NameBox>
        <Dots><DotsV /></Dots>
        <FxBox><FxSlot $w={36}><X /></FxSlot><FxSlot $w={36}><Check /></FxSlot><FxText>fx</FxText></FxBox>
        <FInput><Chev /></FInput>
      </FormulaBar>
      <SheetWrap>
        <Canvas>
          <Handle />
          <FreezeLine />
          <Table>
            <Head>
              <Watermark>SOFTPEDIA</Watermark>
              <HeadBtn><IELogo /></HeadBtn>
              <HeadBtn>?</HeadBtn>
              <HeadTitle>Helical cylindrical torsion spring made of round wires a bars [mm]</HeadTitle>
            </Head>
            <Row $h={21}>
              <RowFill $bg="#c0c0c0"><Num $center>i</Num><RowText $ml={9}>Calculation without errors.</RowText></RowFill>
            </Row>
            <Row $h={19} $line>
              <Flag />
              <RowFill $bg="#c0c0c0"><Num $center>ii</Num><Box $mt={-6} /><RowText>Project information</RowText></RowFill>
            </Row>
            {rows.map((r, i) => {
              if (r.t === 's') {
                return (
                  <Row key={i} $h={20} $gap={2} $line>
                    {r.flag && <Flag />}
                    <SecCell>{r.n}</SecCell>
                    <PlusBtn>+</PlusBtn>
                    <SecTitle $bg={r.bg}>{r.title}</SecTitle>
                  </Row>
                );
              }
              const first = r.h === 19;
              return (
                <Row key={i} $h={r.h || 20} $gap={first ? 0 : 2} $line>
                  <Flag $top={first ? -1 : 0} />
                  <RowFill $bg={r.bg} $inset={1}><Num>{r.n}</Num><Box $mt={r.boxMt} /><RowText>{r.text}</RowText></RowFill>
                </Row>
              );
            })}
          </Table>
        </Canvas>
        <VScroll>
          <SBtn><Tri dir="u" /></SBtn>
          <SBtn $h={18} $mt={1} />
          <Track />
          <SBtn><Tri dir="d" /></SBtn>
        </VScroll>
      </SheetWrap>
      <TabsBar>
        <Nav><Tri dir="l" c="#ccc" /><Tri dir="r" c="#ccc" /></Nav>
        <SheetTab $on $w={94}>Calculation</SheetTab>
        {sheets.map(([t, w]) => <SheetTab key={t} $w={w}>{t}</SheetTab>)}
        <AddTab><Plus /></AddTab>
        <HRight>
          <HDots><DotsV /></HDots>
          <HBtn><Tri dir="l" c="#666" /></HBtn>
          <HThumb />
          <HTrack />
          <HBtn><Tri dir="r" c="#666" /></HBtn>
        </HRight>
      </TabsBar>
      <Status>
        <StatusText>READY</StatusText>
        <StatusRight>
          <ViewBtn $on><ViewNormal /></ViewBtn>
          <ViewBtn><ViewPage /></ViewBtn>
          <ViewBtn><ViewBreak /></ViewBtn>
          <svg width="6" height="2" viewBox="0 0 6 2" style={{ marginLeft: 6 }}><rect width="6" height="2" fill="#fff" /></svg>
          <Slider><Thumb /></Slider>
          <svg width="7" height="7" viewBox="0 0 7 7"><path d="M0 2.5h7v2H0zM2.5 0h2v7h-2z" fill="#fff" /></svg>
          <ZoomPct>100%</ZoomPct>
        </StatusRight>
      </Status>
    </Win>
  );
}
